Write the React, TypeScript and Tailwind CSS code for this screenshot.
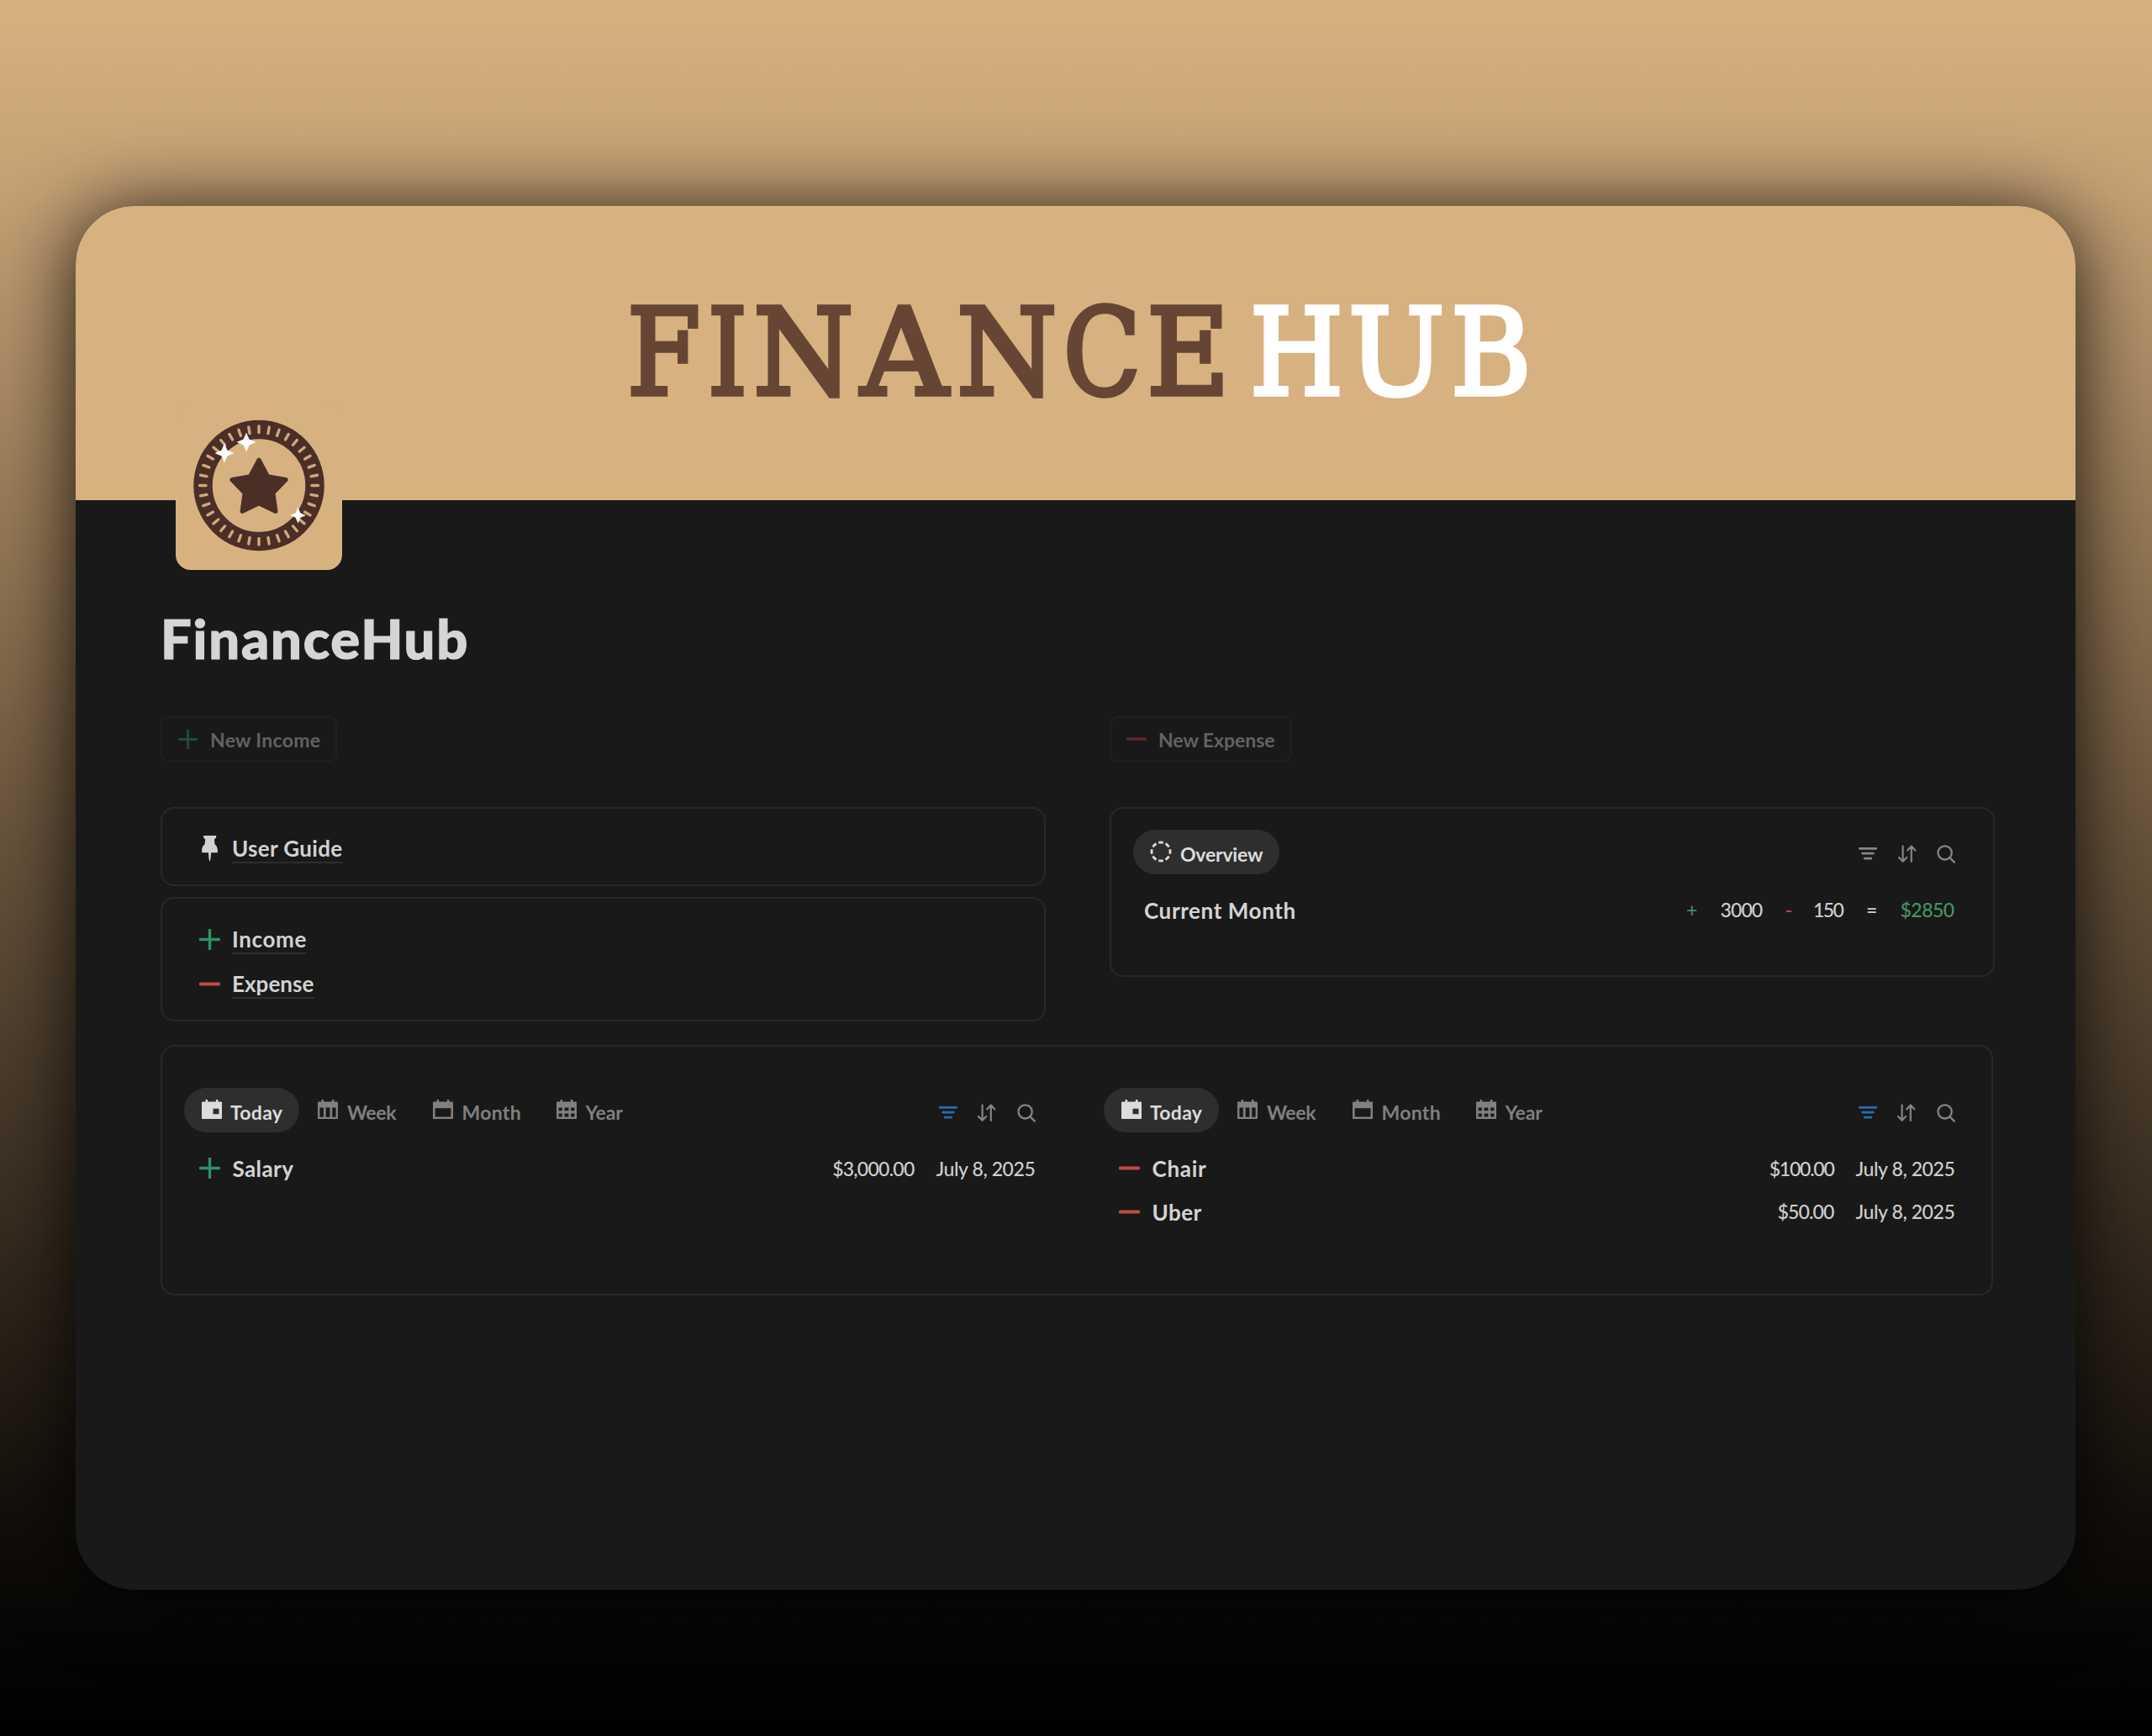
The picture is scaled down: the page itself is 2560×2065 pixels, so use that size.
import type { ReactNode } from "react";

const BANNER: { ch: string; box: string; scale: string }[] = [
  { ch: "F", box: "w-[95.9px]", scale: "scale-x-[0.88]" },
  { ch: "I", box: "w-[54.2px]", scale: "scale-x-[0.83]" },
  { ch: "N", box: "w-[128.2px]", scale: "scale-x-[0.955]" },
  { ch: "A", box: "w-[113.3px]", scale: "scale-x-[1]" },
  { ch: "N", box: "w-[127.2px]", scale: "scale-x-[0.955]" },
  { ch: "C", box: "w-[99px]", scale: "scale-x-[0.84]" },
  { ch: "E", box: "w-[122.8px]", scale: "scale-x-[0.945]" },
];
const BANNER_HUB: { ch: string; box: string; scale: string }[] = [
  { ch: "H", box: "w-[117.5px]", scale: "scale-x-[0.89]" },
  { ch: "U", box: "w-[122.4px]", scale: "scale-x-[0.95]" },
  { ch: "B", box: "w-[100px]", scale: "scale-x-[0.91]" },
];

function Letters({ items }: { items: typeof BANNER }) {
  return (
    <>
      {items.map((l, i) => (
        <span key={i} className={`inline-block ${l.box}`}>
          <span className={`inline-block origin-left ${l.scale}`}>{l.ch}</span>
        </span>
      ))}
    </>
  );
}

function starPoints(cx: number, cy: number, outer: number, inner: number) {
  return Array.from({ length: 10 }, (_, i) => {
    const a = (Math.PI / 5) * i - Math.PI / 2;
    const r = i % 2 === 0 ? outer : inner;
    return `${(cx + r * Math.cos(a)).toFixed(2)},${(cy + r * Math.sin(a)).toFixed(2)}`;
  }).join(" ");
}

function Sparkle({ x, y, r }: { x: number; y: number; r: number }) {
  const q = r * 0.3;
  return (
    <path
      fill="#ffffff"
      d={`M${x} ${y - r}L${x + q} ${y - q}L${x + r} ${y}L${x + q} ${y + q}L${x} ${y + r}L${x - q} ${y + q}L${x - r} ${y}L${x - q} ${y - q}Z`}
    />
  );
}

function Medal() {
  return (
    <svg className="h-[198px] w-[198px]" viewBox="0 0 198 198">
      <circle cx="99" cy="97.5" r="66.5" fill="none" stroke="#4b2e26" strokeWidth="22.5" />
      {Array.from({ length: 36 }, (_, i) => (
        <line
          key={i}
          x1="99"
          y1="27"
          x2="99"
          y2="34.5"
          stroke="#cfa87c"
          strokeWidth="3.4"
          strokeLinecap="round"
          transform={`rotate(${i * 10} 99 97.5)`}
        />
      ))}
      <polygon
        points={starPoints(99, 101, 33.5, 17.5)}
        fill="#4b2e26"
        stroke="#4b2e26"
        strokeWidth="5.5"
        strokeLinejoin="round"
      />
      <Sparkle x={58} y={59} r={11.5} />
      <Sparkle x={84} y={46} r={11.5} />
      <Sparkle x={145.5} y={133} r={9.5} />
    </svg>
  );
}

function Plus({ color, size = 25 }: { color: string; size?: number }) {
  return (
    <svg width={size} height={size} viewBox="0 0 25 25" className="shrink-0">
      <path d="M12.5 1.2V23.8M1.2 12.5H23.8" stroke={color} strokeWidth="3.4" strokeLinecap="round" />
    </svg>
  );
}

function Minus({ color, size = 25 }: { color: string; size?: number }) {
  return (
    <svg width={size} height={size} viewBox="0 0 25 25" className="shrink-0">
      <path d="M1.5 12.5H23.5" stroke={color} strokeWidth="3.8" strokeLinecap="round" />
    </svg>
  );
}

function Pin() {
  return (
    <svg width="19" height="31" viewBox="0 0 18.7 31" className="mx-[3px] shrink-0" fill="#d2d2d2">
      <path d="M2 0H17V2.6L14.8 4.5L15.3 10C17.3 11.8 18.7 14 18.7 17V20.3H11L10.3 28L9.35 31L8.4 28L7.8 20.3H0V17C0 14 1.5 11.8 3.5 10L4.1 4.5L2 2.6Z" />
    </svg>
  );
}

function DashedCircle() {
  return (
    <svg width="26" height="26" viewBox="0 0 26 26" className="-mt-px shrink-0">
      <circle
        cx="13"
        cy="13"
        r="11"
        fill="none"
        stroke="#dcdcdc"
        strokeWidth="2.8"
        pathLength="80"
        strokeDasharray="6.6 3.4"
        strokeDashoffset="3.3"
      />
    </svg>
  );
}

type CalKind = "today" | "week" | "month" | "year";
const CAL_HOLES: Record<CalKind, string> = {
  today: "M13.5 10.8H20.5V17.2H13.5Z",
  week: "M2.4 9.6V20.8H6.8V9.6ZM9.6 9.6V20.8H14.4V9.6ZM17.2 9.6V20.8H21.6V9.6Z",
  month: "M2.6 10.3V20.6H21.4V10.3Z",
  year: "M2.6 9.4V13.3H6.8V9.4ZM9.6 9.4V13.3H14.4V9.4ZM17.2 9.4V13.3H21.4V9.4ZM2.6 16.4V20.6H6.8V16.4ZM9.6 16.4V20.6H14.4V16.4ZM17.2 16.4V20.6H21.4V16.4Z",
};

function Calendar({ kind }: { kind: CalKind }) {
  return (
    <svg width="24" height="23" viewBox="0 0 24 23" fill="currentColor" className="-mt-[2px] shrink-0">
      <path fillRule="evenodd" d={`M4.6 0H7.1V2.6H16.9V0H19.4V2.6H23.2Q24 2.6 24 3.4V22.2Q24 23 23.2 23H.8Q0 23 0 22.2V3.4Q0 2.6 .8 2.6H4.6Z${CAL_HOLES[kind]}`} />
    </svg>
  );
}

function Toolbar({ active }: { active?: boolean }) {
  return (
    <div className="flex items-center gap-[24.5px] pt-[6px] text-[#858585]">
      <svg width="22" height="22" viewBox="0 0 22 22" fill="none" strokeWidth="2.8" strokeLinecap="round" className={active ? "text-[#2a6cae]" : ""} stroke="currentColor">
        <path d="M1.3 4.4H20.7M4.6 10.2H17.4M7.2 16.2H14.8" />
      </svg>
      <svg width="22" height="22" viewBox="0 0 22 22" fill="none" stroke="currentColor" strokeWidth="2.2" strokeLinecap="round" strokeLinejoin="round">
        <path d="M5.6 1.5V19.5M1 15L5.6 19.8L10.2 15M15.8 20V2M11.2 6.4L15.8 1.6L20.4 6.4" />
      </svg>
      <svg width="22" height="22" viewBox="0 0 22 22" fill="none" stroke="currentColor" strokeWidth="2.3" strokeLinecap="round">
        <circle cx="9.6" cy="9.4" r="8.1" />
        <path d="M15.6 15.4L20.8 20.6" />
      </svg>
    </div>
  );
}

function PageLink({ icon, label, spacing }: { icon: ReactNode; label: string; spacing: string }) {
  return (
    <div className="flex h-[34px] items-center gap-[14px]">
      {icon}
      <span className={`block h-[34px] border-b-2 border-[#2d2d2d] text-[26px] leading-[32px] font-bold text-[#d2d2d2] ${spacing}`}>
        {label}
      </span>
    </div>
  );
}

function Tabs() {
  return (
    <div className="flex h-[53px] text-[23px] font-bold text-[#808080]">
      <div className="mr-[22px] flex w-[137px] items-center gap-[10.5px] rounded-full bg-[#2e2e2e] pl-[20.5px] text-[#dcdcdc]">
        <Calendar kind="today" />
        <span className="pt-[4px] leading-[28px] tracking-[0.3px]">Today</span>
      </div>
      <div className="flex w-[136.5px] items-center gap-[11px]">
        <Calendar kind="week" />
        <span className="pt-[4px] leading-[28px] tracking-[-0.4px]">Week</span>
      </div>
      <div className="flex w-[147px] items-center gap-[11px]">
        <Calendar kind="month" />
        <span className="pt-[4px] leading-[28px] tracking-[0.3px]">Month</span>
      </div>
      <div className="flex items-center gap-[11px]">
        <Calendar kind="year" />
        <span className="pt-[4px] leading-[28px] tracking-[-0.2px]">Year</span>
      </div>
    </div>
  );
}

type Entry = { name: string; spacing: string; amount: string; amountSpacing: string };

function Ledger({ sign, entries }: { sign: ReactNode; entries: Entry[] }) {
  return (
    <div className="w-[1012.5px]">
      <div className="flex items-center justify-between">
        <Tabs />
        <Toolbar active />
      </div>
      <div className="mt-[17px]">
        {entries.map((e) => (
          <div key={e.name} className="flex h-[51.5px] items-center pl-[18px]">
            {sign}
            <span className={`ml-[14.5px] flex-1 pt-[2px] text-[26px] font-bold text-[#d4d4d4] ${e.spacing}`}>{e.name}</span>
            <span className={`text-[23px] font-medium text-[#cfcfcf] ${e.amountSpacing}`}>{e.amount}</span>
            <span className="ml-[26px] w-[118px] text-[23px] font-medium whitespace-nowrap text-[#cfcfcf] tracking-[-0.4px]">July 8, 2025</span>
          </div>
        ))}
      </div>
    </div>
  );
}

export default function App() {
  return (
    <div className="h-[2065px] w-[2560px] overflow-hidden bg-[linear-gradient(180deg,#d8b180_0%,#c4a074_11%,#9a7d59_28%,#68543c_48%,#3e3224_67%,#15110c_86%,#070605_94%,#000000_100%)] pt-[245px] pl-[90px] font-['Lato',sans-serif]">
      <main className="h-[1646px] w-[2379px] overflow-hidden rounded-[70px] bg-[#191919] shadow-[0_6px_92px_rgba(0,0,0,0.85)]">
        <header className="h-[349.5px] bg-[#d7b180] pt-[99.5px] pl-[656px]">
          <h1 className="h-[150px] font-['DejaVu_Serif',serif] text-[143px] leading-[150px] font-normal whitespace-nowrap">
            <span className="text-[#674534] [-webkit-text-stroke:5.5px_#674534]"><Letters items={BANNER} /></span>
            <span className="text-white [-webkit-text-stroke:5.5px_#ffffff]"><Letters items={BANNER_HUB} /></span>
          </h1>
        </header>

        <div className="relative -mt-[115px] ml-[119px] h-[198px] w-[198px] rounded-[18px] bg-[#d7b180]">
          <Medal />
        </div>

        <div className="pl-[101px]">
          <h2 className="mt-[49px] h-[64px] text-[65px] leading-[64px] font-black text-[#d5d5d5] tracking-[1.8px] [-webkit-text-stroke:1.2px_#d5d5d5]">FinanceHub</h2>

          <div className="mt-[61.5px] grid grid-cols-[1053px_1053px] gap-x-[76px] text-[23px] font-bold text-[#626262]">
            <div className="flex h-[54px] w-[210px] items-center rounded-[9px] border-2 border-[#202020] pl-[19px]">
              <Plus color="#1d4b37" size={23} />
              <span className="ml-[15px] pt-[2px] tracking-[0.3px]">New Income</span>
            </div>
            <div className="flex h-[54px] w-[217px] items-center rounded-[9px] border-2 border-[#202020] pl-[17.5px]">
              <Minus color="#5c2728" size={24} />
              <span className="ml-[14.5px] pt-[2px] tracking-[-0.05px]">New Expense</span>
            </div>
          </div>

          <div className="mt-[53.5px] grid grid-cols-[1053px_1053px] items-start gap-x-[76px]">
            <div className="flex flex-col gap-[13.5px]">
              <section className="h-[94px] rounded-[16px] border-2 border-[#282828] pt-[31px] pl-[44px]">
                <PageLink icon={<Pin />} label="User Guide" spacing="tracking-[0.35px]" />
              </section>
              <section className="flex h-[148px] flex-col gap-[19px] rounded-[16px] border-2 border-[#282828] pt-[31.5px] pl-[44px]">
                <PageLink icon={<Plus color="#2f9165" />} label="Income" spacing="tracking-[0.65px]" />
                <PageLink icon={<Minus color="#c14b4a" />} label="Expense" spacing="tracking-[0.05px]" />
              </section>
            </div>

            <section className="h-[202px] rounded-[16px] border-2 border-[#282828] pt-[25px] pr-[45px] pl-[26px]">
              <div className="flex h-[53px] items-center justify-between">
                <div className="flex h-[53px] w-[174px] items-center rounded-full bg-[#2e2e2e] pl-[20px]">
                  <DashedCircle />
                  <span className="ml-[10px] pt-[5px] text-[23px] leading-[28px] font-bold text-[#dcdcdc] tracking-[-0.2px]">Overview</span>
                </div>
                <Toolbar />
              </div>
              <div className="mt-[22.5px] flex h-[40px] items-center pl-[13px]">
                <span className="flex-1 pt-[2px] text-[26px] font-bold text-[#d4d4d4] tracking-[0.6px]">Current Month</span>
                <div className="grid grid-cols-[40.5px_77px_33.5px_63px_40.5px_65.5px] pt-px text-[23px] font-medium text-[#cfcfcf]">
                  <span className="text-[#3f8f63]">+</span>
                  <span className="tracking-[-0.9px]">3000</span>
                  <span className="text-[#c04b48]">-</span>
                  <span className="tracking-[-1.6px]">150</span>
                  <span>=</span>
                  <span className="text-[#449366] tracking-[-0.5px]">$2850</span>
                </div>
              </div>
            </section>
          </div>

          <section className="mt-[28px] flex h-[297.5px] w-[2180px] gap-[81.5px] rounded-[16px] border-2 border-[#282828] pt-[49px] pl-[26px]">
            <Ledger
              sign={<Plus color="#2f9165" />}
              entries={[{ name: "Salary", spacing: "tracking-[0.4px]", amount: "$3,000.00", amountSpacing: "tracking-[-0.75px]" }]}
            />
            <Ledger
              sign={<Minus color="#c14b40" />}
              entries={[
                { name: "Chair", spacing: "tracking-[0.7px]", amount: "$100.00", amountSpacing: "tracking-[-1.25px]" },
                { name: "Uber", spacing: "tracking-[0.4px]", amount: "$50.00", amountSpacing: "tracking-[-0.85px]" },
              ]}
            />
          </section>
        </div>
      </main>
    </div>
  );
}
